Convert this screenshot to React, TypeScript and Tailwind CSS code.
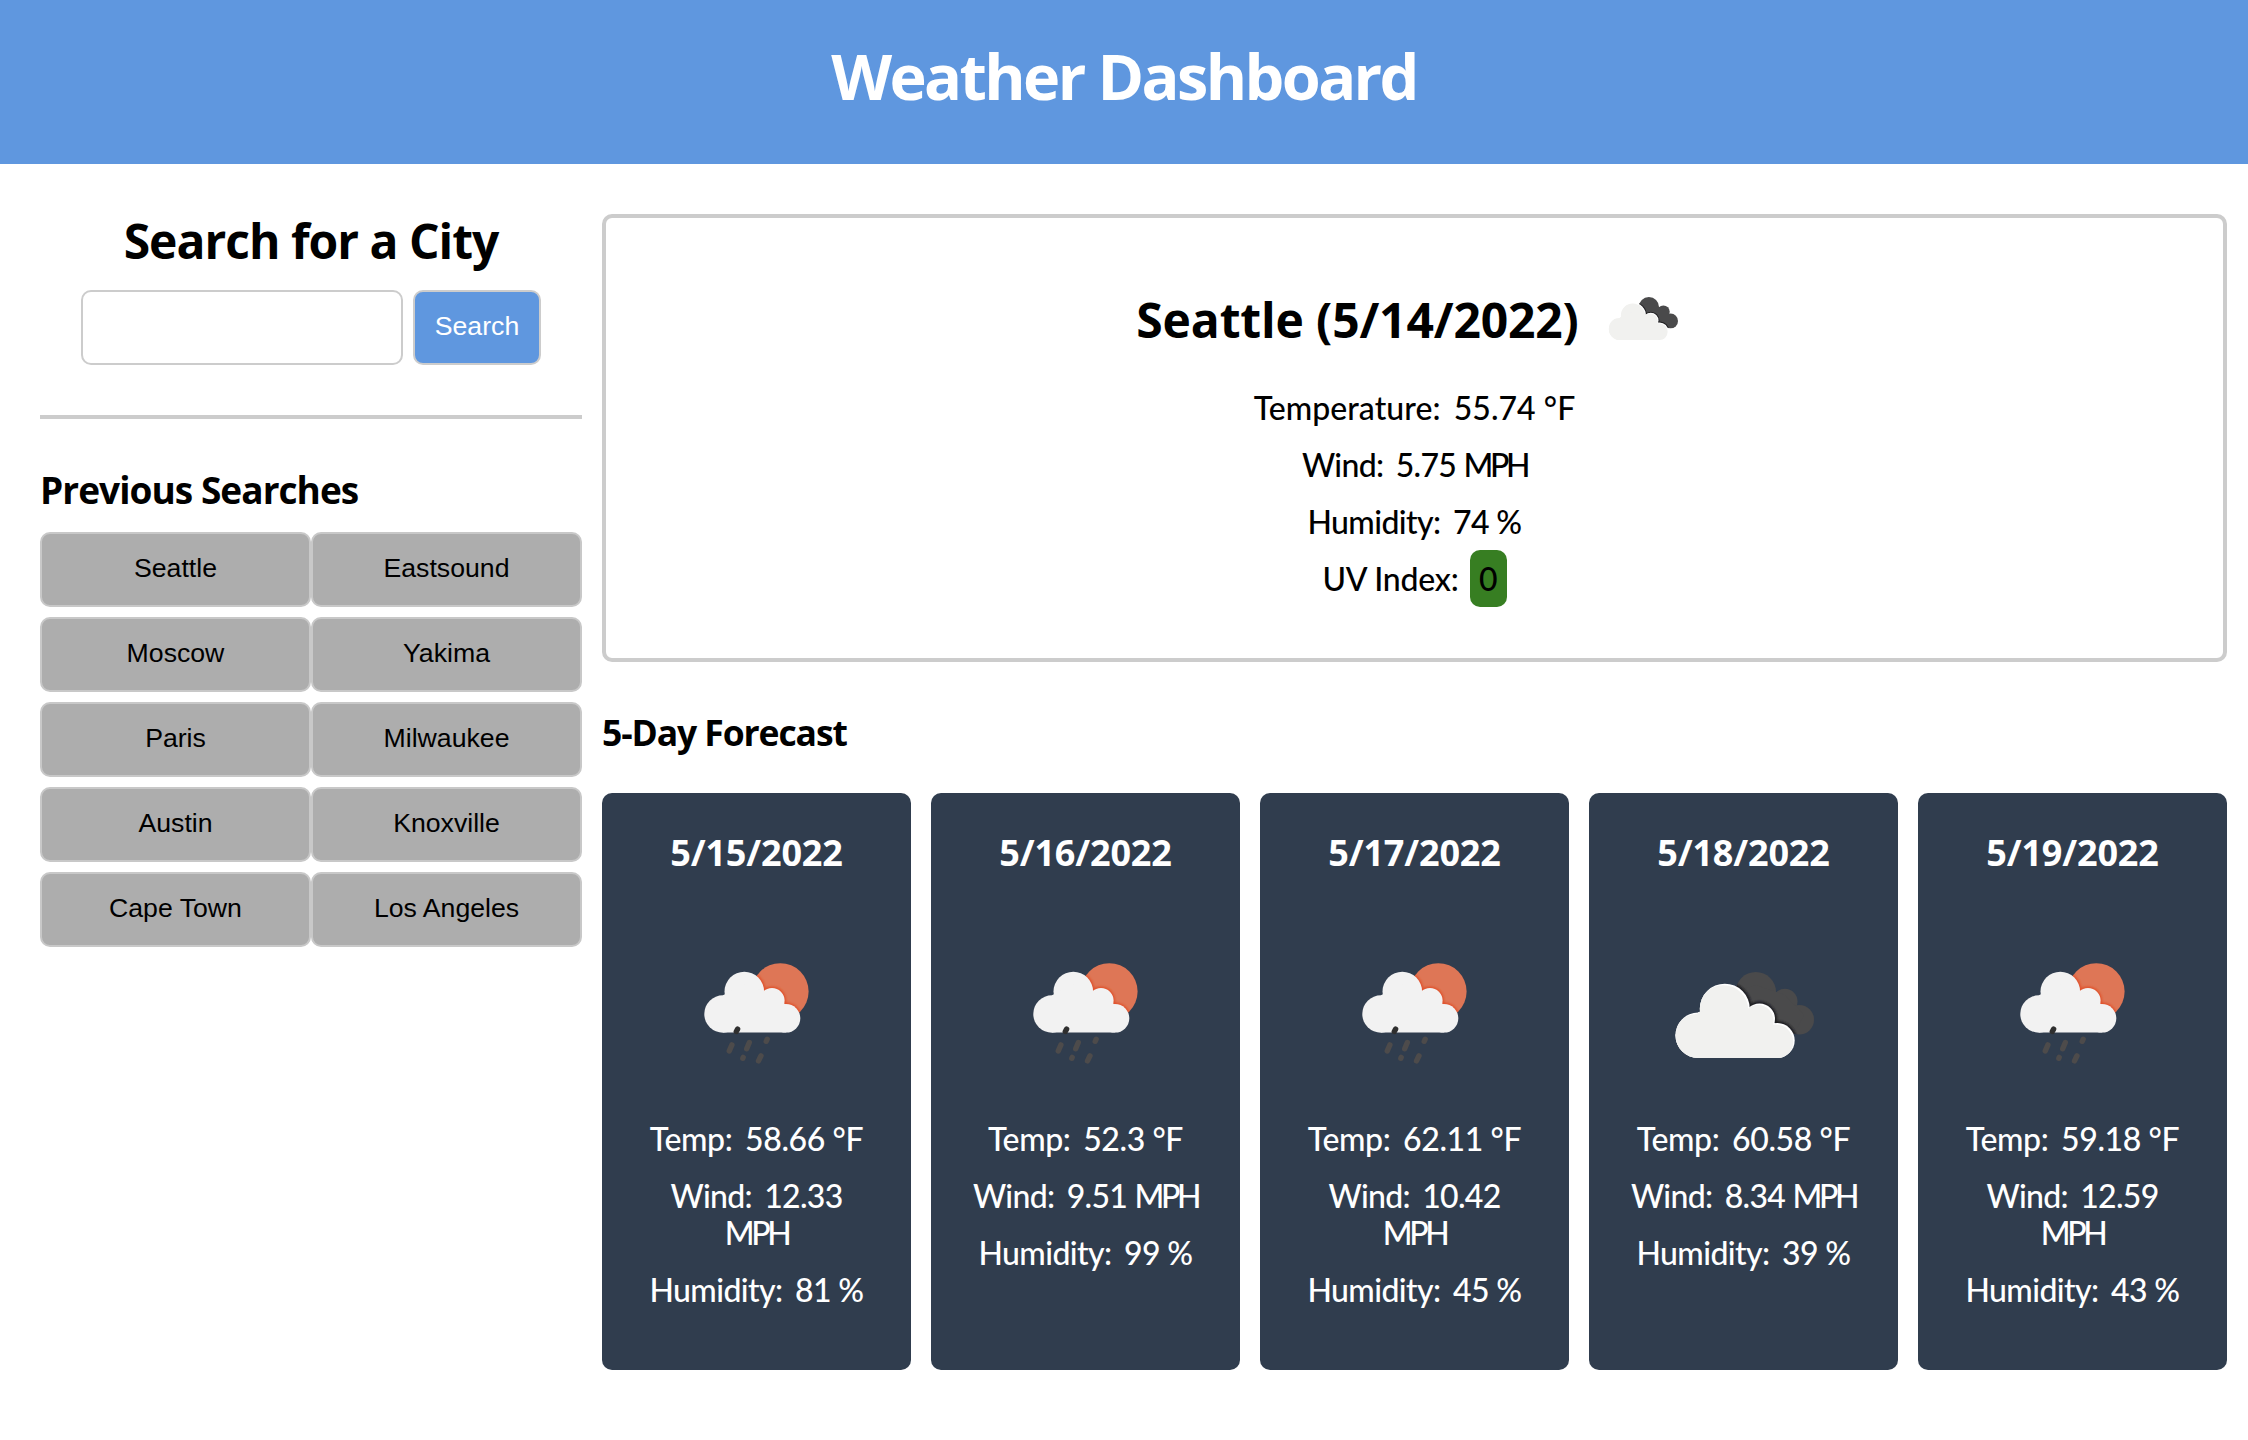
import type { ReactNode } from "react";

const cities = [
  "Seattle", "Eastsound", "Moscow", "Yakima", "Paris",
  "Milwaukee", "Austin", "Knoxville", "Cape Town", "Los Angeles",
];

type Sky = "rain" | "clouds";

const forecast: { date: string; sky: Sky; temp: string; wind: string; humidity: string }[] = [
  { date: "5/15/2022", sky: "rain", temp: "58.66", wind: "12.33", humidity: "81" },
  { date: "5/16/2022", sky: "rain", temp: "52.3", wind: "9.51", humidity: "99" },
  { date: "5/17/2022", sky: "rain", temp: "62.11", wind: "10.42", humidity: "45" },
  { date: "5/18/2022", sky: "clouds", temp: "60.58", wind: "8.34", humidity: "39" },
  { date: "5/19/2022", sky: "rain", temp: "59.18", wind: "12.59", humidity: "43" },
];

function CloudsIcon({ id, className }: { id: string; className: string }) {
  const front = (
    <>
      <circle cx="54.2" cy="135.3" r="22.7" />
      <circle cx="80.8" cy="108.7" r="25" />
      <circle cx="115.5" cy="119" r="15.5" />
      <circle cx="133.2" cy="140.5" r="17.5" />
      <path d="M54 112.6L80 100L116 112L133 125V158H54Z" />
    </>
  );
  const back = (
    <>
      <circle cx="111.8" cy="92.3" r="20.3" />
      <circle cx="140.8" cy="101.5" r="12.7" />
      <circle cx="155.2" cy="119.8" r="14.8" />
      <path d="M90 92L112 85L141 95L160 115L150 134L110 130Z" />
    </>
  );
  return (
    <svg viewBox="0 0 200 200" className={className}>
      <defs>
        <clipPath id={`${id}-back`}>{back}</clipPath>
        <clipPath id={`${id}-front`}>{front}</clipPath>
        <filter id={`${id}-soft`}><feGaussianBlur stdDeviation="1" /></filter>
      </defs>
      <g fill="#4a4a4b">{back}</g>
      <g clipPath={`url(#${id}-back)`}>
        <g fill="#1f1f20" stroke="#1f1f20" strokeWidth="4" filter={`url(#${id}-soft)`}>{front}</g>
      </g>
      <g fill="#ffffff">{front}</g>
      <g clipPath={`url(#${id}-front)`}>
        <g fill="#f1f1ef" transform="translate(-1.5 1.5)">{front}</g>
        <rect x="30" y="134" width="82" height="24" fill="#f1f1ef" />
      </g>
    </svg>
  );
}

function RainIcon({ id, className }: { id: string; className: string }) {
  const cloud = (
    <>
      <circle cx="66.7" cy="114.7" r="18.7" />
      <circle cx="88" cy="92.3" r="19.8" />
      <circle cx="115.7" cy="101.3" r="12.6" />
      <circle cx="129.7" cy="119" r="14.3" />
      <path d="M66.7 96L88 85L116 95L130 106V133.3H66.7Z" />
    </>
  );
  return (
    <svg viewBox="0.7 0.7 200 200" className={className}>
      <defs>
        <clipPath id={`${id}-sun`}><circle cx="124" cy="92.2" r="28.3" /></clipPath>
        <filter id={`${id}-soft`}><feGaussianBlur stdDeviation="0.9" /></filter>
      </defs>
      <circle cx="124" cy="92.2" r="28.3" fill="#de7656" />
      <g clipPath={`url(#${id}-sun)`}>
        <g fill="#e0512c" stroke="#e0512c" strokeWidth="3" filter={`url(#${id}-soft)`}>{cloud}</g>
      </g>
      <g fill="#f2f2f2">{cloud}</g>
      <path d="M81.3 129.8L80 132.2" stroke="#2f2f2f" strokeWidth="5.4" strokeLinecap="round" />
      <g stroke="#4d4b4b" strokeWidth="5.4" strokeLinecap="round" fill="none">
        <path d="M75.6 145.6L73 151.6" />
        <path d="M93 143.2L90.4 149.4" />
        <path d="M110.9 139.9L109.9 142" />
        <path d="M86.9 158.1L86.5 159" />
        <path d="M104.7 156.5L102.2 161.6" />
      </g>
    </svg>
  );
}

function Reading({ label, children, className = "tracking-[-0.6px]" }: { label: string; children: ReactNode; className?: string }) {
  return (
    <p className={className}>
      <span className="mr-[5px]">{label}:</span> {children}
    </p>
  );
}

function Mph() {
  return <span className="tracking-[-3.4px]">MPH</span>;
}

export default function App() {
  return (
    <div className="h-[1440px] bg-white text-black font-['Open_Sans',sans-serif]">
      <header className="h-[164px] bg-[#5f97df] pt-[39px]">
        <h1 className="text-center text-[63px] leading-[74px] font-bold tracking-[-2.6px] text-white">
          Weather Dashboard
        </h1>
      </header>

      <main className="flex gap-5 pl-10 pr-[21px]">
        <aside className="w-[542px] pt-[49px]">
          <h2 className="text-center text-5xl leading-[56px] font-bold tracking-[-1px]">Search for a City</h2>
          <form className="mt-[21px] flex justify-center gap-2.5 font-['Liberation_Sans',sans-serif] text-[26.67px]">
            <input className="h-[75px] w-[322px] rounded-[10px] border-2 border-[#ccc] px-5 outline-none" />
            <button type="button" className="h-[75px] w-[128px] rounded-[10px] border-2 border-[#ccc] bg-[#5f97df] pb-[3px] text-white">
              Search
            </button>
          </form>
          <hr className="mt-[50px] border-t-4 border-[#ccc]" />
          <h3 className="mt-[49px] text-[37px] leading-[43px] font-bold tracking-[-0.95px]">Previous Searches</h3>
          <div className="mt-[21px] grid grid-cols-2 gap-y-2.5 font-['Liberation_Sans',sans-serif] text-[26.67px]">
            {cities.map((city) => (
              <button key={city} type="button" className="h-[75px] rounded-[10px] border-2 border-[#c8c8c8] bg-[#adadad] pb-[3px]">
                {city}
              </button>
            ))}
          </div>
        </aside>

        <div className="flex-1 pt-[50px]">
          <section className="h-[448px] rounded-[10px] border-4 border-[#ccc] pt-[74px]">
            <div className="flex h-14 justify-center gap-[14px]">
              <h2 className="text-5xl leading-[56px] font-bold tracking-[-0.15px]">Seattle (5/14/2022)</h2>
              <CloudsIcon id="today" className="-mt-[31px] size-[100px]" />
            </div>
            <div className="mt-[41px] flex flex-col items-center gap-5 text-[32px] leading-[37px] font-medium font-['Lato',sans-serif]">
              <Reading label="Temperature" className="tracking-[0.05px]">55.74 °F</Reading>
              <Reading label="Wind" className="tracking-[-0.7px]">5.75 <Mph /></Reading>
              <Reading label="Humidity">74 %</Reading>
              <p className="-my-2.5 flex leading-[57px] tracking-[-0.2px]">
                UV Index:
                <span className="ml-[11px] w-[37px] rounded-[10px] bg-[#377e22] text-center">0</span>
              </p>
            </div>
          </section>

          <h3 className="mt-[49px] text-[35.5px] leading-[42px] font-bold tracking-[-1.1px]">5-Day Forecast</h3>
          <div className="mt-10 grid grid-cols-5 gap-5">
            {forecast.map((day, i) => (
              <article key={day.date} className="flex h-[577px] flex-col items-center rounded-[10px] bg-[#303d4e] px-[38px] pt-[39px] text-center text-white">
                <h3 className="text-4xl leading-[42px] font-bold tracking-[-0.15px]">{day.date}</h3>
                {day.sky === "rain" ? (
                  <RainIcon id={`day${i}`} className="mt-[26px] size-[200px] shrink-0" />
                ) : (
                  <CloudsIcon id={`day${i}`} className="mt-[26px] size-[200px] shrink-0" />
                )}
                <div className="mt-5 flex flex-col gap-5 text-[32px] leading-[37px] font-medium font-['Lato',sans-serif]">
                  <Reading label="Temp" className="tracking-[-0.4px]">{day.temp} °F</Reading>
                  <Reading label="Wind" className="tracking-[-0.7px]">{day.wind} <Mph /></Reading>
                  <Reading label="Humidity">{day.humidity} %</Reading>
                </div>
              </article>
            ))}
          </div>
        </div>
      </main>
    </div>
  );
}
